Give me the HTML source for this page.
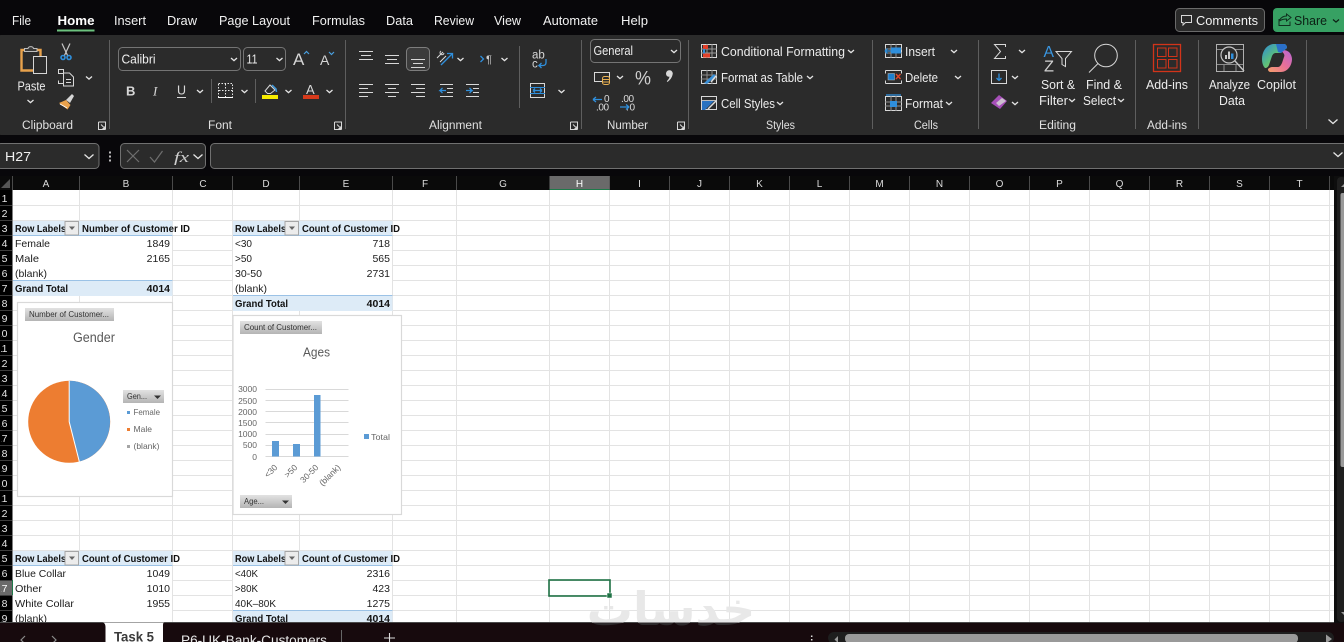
<!DOCTYPE html>
<html><head><meta charset="utf-8"><title>Excel</title>
<style>
html,body{margin:0;padding:0;width:1344px;height:642px;overflow:hidden;background:#08070a}
svg{display:block;font-family:"Liberation Sans",Arial,sans-serif}
.m{font-size:13px;fill:#f2f2f2}
.r{font-size:12.5px;fill:#ececec}
.g{font-size:11.5px;fill:#e0e0e0}
.c{font-size:10px;fill:#dcdcdc;text-anchor:middle}
.n{font-size:10.5px;fill:#e4e4e4;text-anchor:end}
.d{font-size:10.5px;fill:#1c1c1c}
.b{font-size:10.5px;fill:#111;font-weight:bold}
.e{text-anchor:end}
.i{fill:none;stroke:#d8d8d8;stroke-width:1}
.bl{stroke:#2f8fdc;fill:none;stroke-width:1.3}
.ch{fill:none;stroke:#e4e4e4;stroke-width:1.3}
.cb{font-size:8px;fill:#333}
.ax{font-size:8.5px;fill:#666}
</style></head><body>
<svg width="1344" height="642" viewBox="0 0 1344 642" xmlns="http://www.w3.org/2000/svg">
<defs>
<path id="ch" d="M0 0l3 2.6 3-2.6" class="ch"/>
<linearGradient id="btn" x1="0" y1="0" x2="0" y2="1"><stop offset="0" stop-color="#e2e2e2"/><stop offset="1" stop-color="#b4b4b4"/></linearGradient>
<linearGradient id="cop" x1="0" y1="0" x2="1" y2="1"><stop offset="0" stop-color="#2d8ad8"/><stop offset=".5" stop-color="#5cc07a"/><stop offset="1" stop-color="#e8c040"/></linearGradient>
<linearGradient id="cop2" x1="1" y1="0" x2="0" y2="1"><stop offset="0" stop-color="#b665d6"/><stop offset=".5" stop-color="#e86f98"/><stop offset="1" stop-color="#f5a06a"/></linearGradient>
<clipPath id="sheet"><rect x="0" y="190" width="1344" height="432.5"/></clipPath>
<clipPath id="dark"><rect x="0" y="622.5" width="1344" height="20"/></clipPath>
<clipPath id="rowh"><rect x="1" y="190" width="11" height="433"/></clipPath>
<clipPath id="tabc"><rect x="0" y="620" width="1344" height="22"/></clipPath>
</defs>

<!-- top chrome -->
<rect width="1344" height="642" fill="#08070a"/>
<text class="m" x="12" y="25" textLength="19" lengthAdjust="spacingAndGlyphs">File</text>
<text class="m" x="57.500" y="25" textLength="37" lengthAdjust="spacingAndGlyphs" style="font-weight:bold;fill:#fff">Home</text>
<rect x="57" y="29.500" width="37.500" height="2" fill="#6cc27e"/>
<text class="m" x="114" y="25" textLength="32" lengthAdjust="spacingAndGlyphs">Insert</text>
<text class="m" x="167" y="25" textLength="30" lengthAdjust="spacingAndGlyphs">Draw</text>
<text class="m" x="219" y="25" textLength="71" lengthAdjust="spacingAndGlyphs">Page Layout</text>
<text class="m" x="312" y="25" textLength="53" lengthAdjust="spacingAndGlyphs">Formulas</text>
<text class="m" x="386" y="25" textLength="27" lengthAdjust="spacingAndGlyphs">Data</text>
<text class="m" x="434" y="25" textLength="40" lengthAdjust="spacingAndGlyphs">Review</text>
<text class="m" x="494" y="25" textLength="27" lengthAdjust="spacingAndGlyphs">View</text>
<text class="m" x="543" y="25" textLength="55" lengthAdjust="spacingAndGlyphs">Automate</text>
<text class="m" x="621" y="25" textLength="27" lengthAdjust="spacingAndGlyphs">Help</text>

<!-- comments / share -->
<rect x="1175.500" y="8.500" width="89" height="23" rx="4" fill="#2a2a2a" stroke="#6a6a6a"/>
<path d="M1181.500 15.500h10v7h-6l-2.500 2.500v-2.500h-1.500z" class="i"/>
<text class="m" x="1196" y="25" textLength="62" lengthAdjust="spacingAndGlyphs">Comments</text>
<rect x="1273" y="8" width="75" height="24" rx="4" fill="#37a163"/>
<path d="M1279 19v6.500h11v-4M1279.500 20c2-3 4-4 7-4v-2l4.500 3.500-4.500 3.500v-2c-3 0-5 .5-7 2" fill="none" stroke="#10301f" stroke-width="1"/>
<text class="m" x="1294" y="25" textLength="33" lengthAdjust="spacingAndGlyphs" style="fill:#0c1f14">Share</text>
<path d="M1333 19.500l3 2.600 3-2.600" fill="none" stroke="#0c1f14" stroke-width="1.200"/>

<!-- ribbon -->
<rect x="-6" y="35" width="1356" height="100" rx="7" fill="#2b2b2b"/>
<g stroke="#5e5e5e" stroke-width="1">
<path d="M109.500 40v89M345.500 40v89M581.500 40v89M688.500 40v89M872.500 40v89M978.500 40v89M1135.500 40v89M1198.500 40v89M1306.500 40v89M519.500 46v62M211.500 79v24M255.500 79v24"/>
</g>

<!-- clipboard -->
<path d="M27 50h-5.500v20.500h12" fill="none" stroke="#e8a24c" stroke-width="2.400"/>
<path d="M34 50h6.500v6" fill="none" stroke="#e8a24c" stroke-width="2.400"/>
<path d="M24.500 51.500v-3h3.500c.5-2.500 5-2.500 5.500 0h3.500v3z" fill="#3a3a3a" stroke="#bdbdbd"/>
<rect x="33.500" y="56.500" width="13" height="17" fill="#2b2b2b" stroke="#d6d6d6"/>
<text class="r" x="17.500" y="90.500" textLength="28" lengthAdjust="spacingAndGlyphs">Paste</text>
<use href="#ch" x="27.500" y="100"/>
<path d="M62 43.500l6 13M70 43.500l-6 13" stroke="#c8c8c8" stroke-width="1.200"/>
<circle cx="63" cy="57.500" r="2" fill="none" stroke="#2f8fdc" stroke-width="1.600"/><circle cx="69" cy="57.500" r="2" fill="none" stroke="#2f8fdc" stroke-width="1.600"/>
<path d="M63 73.500h-4.500v-4h5v14h-5v-3M63.500 73h6l4 4v9h-10z" class="i"/>
<path d="M66 79.500h5M66 82.500h5" class="i"/>
<use href="#ch" x="86" y="76.500"/>
<path d="M59 103l7-3 4.500 5-3 4.500z" fill="#e9a24d"/><path d="M66 100l6-6 2 2-4 7z" fill="#d6d6d6"/><path d="M60 104l7 4" stroke="#fff" stroke-width="1"/>
<text class="g" x="22" y="129" textLength="51" lengthAdjust="spacingAndGlyphs">Clipboard</text>
<path d="M98.500 122v7.500h7M98.500 122h7v7.500M101 124.500l4 4M105 126v2.500h-2.500" class="i" stroke-width=".9"/>

<!-- font -->
<rect x="118.500" y="47.500" width="122" height="23" rx="4" fill="#2b2b2b" stroke="#747474"/>
<text class="r" x="121.500" y="63.500" textLength="34" lengthAdjust="spacingAndGlyphs" style="fill:#f0f0f0">Calibri</text>
<use href="#ch" x="231" y="58"/>
<rect x="243.500" y="47.500" width="42" height="23" rx="4" fill="#2b2b2b" stroke="#747474"/>
<text class="r" x="246.500" y="63.500" textLength="11" lengthAdjust="spacingAndGlyphs">11</text>
<use href="#ch" x="276.500" y="58"/>
<text x="293" y="65" style="font-size:17px;fill:#d6d6d6">A</text>
<path d="M304 54l2.500-2.500 2.500 2.500" fill="none" stroke="#4aa0e0" stroke-width="1.200"/>
<text x="320" y="65" style="font-size:14px;fill:#d6d6d6">A</text>
<path d="M329 52l2.500 2.500 2.500-2.500" fill="none" stroke="#4aa0e0" stroke-width="1.200"/>
<text x="126" y="95.500" style="font-size:13px;font-weight:bold;fill:#d8d8d8">B</text>
<text x="153" y="95.500" style="font-size:13px;font-style:italic;fill:#d8d8d8;font-family:'Liberation Serif',serif">I</text>
<text x="177" y="94.500" style="font-size:12.500px;fill:#d8d8d8">U</text><path d="M177 97.500h9" stroke="#d8d8d8"/>
<use href="#ch" x="197" y="90"/>
<rect x="218.500" y="83.500" width="14" height="14" fill="none" stroke="#e8e8e8" stroke-dasharray="1.500 1.500"/><path d="M225.500 84v14M219 90.500h14" stroke="#e8e8e8" stroke-dasharray="1.500 1.500"/><path d="M218 97.500h15" stroke="#fff"/>
<use href="#ch" x="241.500" y="90"/>
<path d="M265 91l5-6 5 5-4.500 3.500h-3z" fill="none" stroke="#d8d8d8"/><path d="M272 85l4 4 .5 3" stroke="#3c98dc" fill="none" stroke-width="1.500"/>
<rect x="262" y="95" width="16" height="4" fill="#f7ec00"/>
<use href="#ch" x="285.500" y="90"/>
<text x="306" y="94" style="font-size:13px;fill:#d8d8d8">A</text>
<rect x="303" y="95" width="16" height="4" fill="#d63a1b"/>
<use href="#ch" x="326.500" y="90"/>
<text class="g" x="208" y="129" textLength="24" lengthAdjust="spacingAndGlyphs">Font</text>
<path d="M334.500 122v7.500h7M334.500 122h7v7.500M337 124.500l4 4M341 126v2.500h-2.500" class="i" stroke-width=".9"/>

<!-- alignment -->
<path d="M359 51.500h14M361 55.500h10M359 59.500h14M385 55.500h14M387 59.500h10M385 63.500h14" class="i"/>
<rect x="406.500" y="47.500" width="23" height="23" rx="4" fill="#3c3c3c" stroke="#7d7d7d"/>
<path d="M411 59.500h14M413 63.500h10M411 67.500h14" class="i"/>
<path d="M359 84.500h14M359 88.500h9M359 92.500h14M359 96.500h9M385 84.500h14M388 88.500h8M385 92.500h14M388 96.500h8M411 84.500h14M416 88.500h9M411 92.500h14M416 96.500h9" class="i"/>
<path d="M440 84.500h13M447 88.500h6M447 92.500h6M440 96.500h13M466 84.500h13M473 88.500h6M473 92.500h6M466 96.500h13" class="i"/>
<path d="M446 90.500h-6l2.500-2.500M440 90.500l2.500 2.500M466 90.500h6l-2.500-2.500M472 90.500l-2.500 2.500" class="bl"/>
<path d="M437 58l6-6 M440 62l6-6M444 53a2 2 0 1 1-3-2" class="i"/><path d="M441 65l11-11M447 53.500h5.500v5" class="bl"/>
<use href="#ch" x="457.500" y="58"/>
<path d="M480.500 56l3 3-3 3" class="bl"/>
<text x="486" y="63" style="font-size:11px;fill:#cfcfcf">¶</text>
<use href="#ch" x="501.500" y="58"/>
<text x="532" y="58.500" style="font-size:11.500px;fill:#d6d6d6">ab</text>
<text x="532" y="67.500" style="font-size:11.500px;fill:#d6d6d6">c</text>
<path d="M546 59v3.500c0 2-1 3-3 3h-4l2.500-2.500M539 65.500l2.500 2.500" class="bl"/>
<rect x="530.500" y="83.500" width="14" height="14" class="i"/><path d="M530 87.500h15M530 93.500h15" stroke="#2f8fdc"/><path d="M533 90.500h9M533 90.500l2-2M533 90.500l2 2M542 90.500l-2-2M542 90.500l-2 2" class="bl" stroke-width="1"/>
<use href="#ch" x="558.500" y="90"/>
<text class="g" x="429" y="129" textLength="53" lengthAdjust="spacingAndGlyphs">Alignment</text>
<path d="M570.500 122v7.500h7M570.500 122h7v7.500M573 124.500l4 4M577 126v2.500h-2.500" class="i" stroke-width=".9"/>

<!-- number -->
<rect x="590.500" y="39.500" width="90" height="23" rx="4" fill="#2b2b2b" stroke="#747474"/>
<text class="r" x="593.500" y="55" textLength="39.500" lengthAdjust="spacingAndGlyphs">General</text>
<use href="#ch" x="671" y="50"/>
<rect x="594.500" y="72.500" width="15" height="9" class="i"/><rect x="602.500" y="76.500" width="7" height="8" rx="2" fill="#2b2b2b" stroke="#e8b052"/><path d="M603 79.500h6M603 82h6" stroke="#e8b052"/>
<use href="#ch" x="617" y="76"/>
<text x="635" y="84.500" style="font-size:19px;fill:#cfcfcf" textLength="16" lengthAdjust="spacingAndGlyphs">%</text>
<path d="M666 73.500a3.400 3.400 0 1 1 6.500 1.500c-.6 2.500-2.300 5-5 7l-.7-.8c1.400-1.400 2.400-2.800 2.700-4.600-2 .5-3.500-1-3.500-3.100z" fill="#d8d8d8"/>
<text x="604" y="102" style="font-size:10px;fill:#dcdcdc">0</text><text x="596" y="110.500" style="font-size:10px;fill:#dcdcdc" textLength="13">.00</text>
<path d="M593 99.500h9M593 99.500l3-2.500M593 99.500l3 2.500" class="bl"/>
<text x="621" y="102" style="font-size:10px;fill:#dcdcdc" textLength="13">.00</text><text x="626" y="110.500" style="font-size:10px;fill:#dcdcdc" textLength="9">.0</text>
<path d="M620 107h9M629 107l-3-2.500M629 107l-3 2.500" class="bl"/>
<text class="g" x="607" y="129" textLength="41" lengthAdjust="spacingAndGlyphs">Number</text>
<path d="M677.500 122v7.500h7M677.500 122h7v7.500M680 124.500l4 4M684 126v2.500h-2.500" class="i" stroke-width=".9"/>

<!-- styles -->
<rect x="701.500" y="44.500" width="15" height="13" class="i" stroke="#bbb"/><path d="M707 44v14M712 44v14M701 49h16M701 53h16" stroke="#9a9a9a"/><rect x="703" y="45" width="5" height="4" fill="#e2402a"/><rect x="703" y="53.500" width="7" height="4" fill="#e2402a"/><rect x="703" y="49" width="2" height="4.500" fill="#2f8fdc"/>
<rect x="701.500" y="70.500" width="15" height="13" class="i"/><path d="M701 75h16M701 79h16M707 70v14M712 70v14" stroke="#888"/><path d="M704 83l10-9 2 2-9 8z" fill="#3a90d8"/><path d="M711 82l5-6" stroke="#ddd" stroke-width="1.500"/>
<rect x="701.500" y="96.500" width="15" height="13" class="i"/><path d="M702 100.500h14" stroke="#bbb"/><path d="M702 101h12l-9 9h-3z" fill="#2a72c0"/><path d="M708 109l8-8" stroke="#ddd" stroke-width="1.500"/>
<text class="r" x="721" y="56" textLength="124" lengthAdjust="spacingAndGlyphs">Conditional Formatting</text>
<use href="#ch" x="848" y="50"/>
<text class="r" x="721" y="82" textLength="82" lengthAdjust="spacingAndGlyphs">Format as Table</text>
<use href="#ch" x="807" y="76"/>
<text class="r" x="721" y="108" textLength="54" lengthAdjust="spacingAndGlyphs">Cell Styles</text>
<use href="#ch" x="777" y="102"/>
<text class="g" x="766" y="129" textLength="29" lengthAdjust="spacingAndGlyphs">Styles</text>

<!-- cells -->
<rect x="885.500" y="44.500" width="16" height="13" class="i" stroke="#bbb"/><path d="M891 44v14M896 44v14M885 49h17M885 53h17" stroke="#909090"/><rect x="891" y="47.500" width="10" height="6" fill="#2f8fdc"/><path d="M893 51h-8M885 51l2.500-2.500M885 51l2.500 2.500" class="bl" stroke-width="1"/>
<path d="M885.500 70.500h16M885.500 83.500h16M885.500 70.500v3M885.500 80.500v3M901.500 70.500v3M901.500 80.500v3" class="i"/><rect x="888" y="73.500" width="6.500" height="6.500" fill="#1e80d0" stroke="#bbb" stroke-width=".5"/><path d="M896 74l4.500 5M900.500 74l-4.500 5" stroke="#e0452a" stroke-width="1.400"/>
<rect x="885.500" y="96.500" width="16" height="14" class="i" stroke="#bbb"/><path d="M891 96v15M896 96v15M885 102h17M885 106h17" stroke="#909090"/><rect x="890" y="101" width="7" height="6" fill="#2f8fdc"/><path d="M886 95h15" class="bl" stroke-width="1"/>
<text class="r" x="905" y="56" textLength="30" lengthAdjust="spacingAndGlyphs">Insert</text>
<use href="#ch" x="951" y="50"/>
<text class="r" x="905" y="82" textLength="33" lengthAdjust="spacingAndGlyphs">Delete</text>
<use href="#ch" x="955" y="76"/>
<text class="r" x="905" y="108" textLength="38" lengthAdjust="spacingAndGlyphs">Format</text>
<use href="#ch" x="946" y="102"/>
<text class="g" x="914" y="129" textLength="24" lengthAdjust="spacingAndGlyphs">Cells</text>

<!-- editing -->
<path d="M1005.500 47v-2.500h-11l6 7-6 7h11v-2.500" class="i"/>
<use href="#ch" x="1019" y="50"/>
<rect x="991.500" y="70.500" width="15" height="13" class="i"/><path d="M999 73.500v7M999 80.500l-2.500-2.500M999 80.500l2.500-2.500" class="bl"/>
<use href="#ch" x="1012" y="76"/>
<path d="M991 103l8-8 8 6-7 8z" fill="#a64fb8"/><path d="M999 106l-3-3 6-5 4 3z" fill="#d4d4d4" opacity=".85"/>
<use href="#ch" x="1012" y="102"/>
<text x="1043.500" y="57" style="font-size:15.500px;fill:#3a96e0" textLength="10.500" lengthAdjust="spacingAndGlyphs">A</text>
<text x="1044" y="71.500" style="font-size:15.500px;fill:#d0d0d0" textLength="10" lengthAdjust="spacingAndGlyphs">Z</text>
<path d="M1056 51.500h15.500l-6 7v8l-3.500-2v-6z" class="i"/>
<circle cx="1106" cy="55.500" r="11.300" class="i" stroke-width="1.200"/><path d="M1098 63.500l-9 9" class="i" stroke-width="1.200"/>
<text class="r" x="1041" y="89" textLength="34" lengthAdjust="spacingAndGlyphs">Sort &amp;</text>
<text class="r" x="1039" y="105" textLength="29" lengthAdjust="spacingAndGlyphs">Filter</text>
<use href="#ch" x="1069" y="99"/>
<text class="r" x="1086" y="89" textLength="36" lengthAdjust="spacingAndGlyphs">Find &amp;</text>
<text class="r" x="1083" y="105" textLength="33" lengthAdjust="spacingAndGlyphs">Select</text>
<use href="#ch" x="1118" y="99"/>
<text class="g" x="1039" y="129" textLength="37" lengthAdjust="spacingAndGlyphs">Editing</text>

<!-- addins -->
<rect x="1153.500" y="44.500" width="27" height="27" fill="none" stroke="#d2341a" stroke-width="1.300"/>
<rect x="1157.500" y="48" width="8.500" height="8.500" fill="none" stroke="#d2341a"/><rect x="1168.500" y="48" width="8.500" height="8.500" fill="none" stroke="#d2341a"/><rect x="1157.500" y="59.500" width="8.500" height="8.500" fill="none" stroke="#d2341a"/><rect x="1168.500" y="59.500" width="8.500" height="8.500" fill="none" stroke="#d2341a"/>
<text class="r" x="1146" y="89" textLength="42" lengthAdjust="spacingAndGlyphs">Add-ins</text>
<text class="g" x="1147" y="129" textLength="40" lengthAdjust="spacingAndGlyphs">Add-ins</text>

<!-- analyze -->
<rect x="1216.500" y="44.500" width="27" height="27" fill="none" stroke="#b0b0b0"/>
<path d="M1217 49.500h26M1217 64.500h26M1224 65v6M1236 65v6" stroke="#8c8c8c"/>
<circle cx="1229" cy="55" r="8" fill="#2b2b2b" stroke="#c4c4c4" stroke-width="1.200"/>
<path d="M1235 61l9 10" stroke="#c4c4c4" stroke-width="1.400"/>
<rect x="1225" y="55" width="2" height="4" fill="#ccc"/><rect x="1228" y="51.500" width="2" height="7.500" fill="#ccc"/><rect x="1231" y="53.500" width="2.500" height="5.500" fill="#2f8fdc"/>
<text class="r" x="1209" y="89" textLength="41" lengthAdjust="spacingAndGlyphs">Analyze</text>
<text class="r" x="1219" y="105" textLength="26" lengthAdjust="spacingAndGlyphs">Data</text>
<!-- copilot -->
<path d="M1262 59c0-8 5-15 12-15h10c2 0 3 2 3 4l-6 5h-5c-2 0-3 1-4 3l-3 9c-1 2-2 3-4 3-2-2-3-5-3-9z" fill="url(#cop)"/>
<path d="M1281 51c4-2 6 0 8 1 2 2 3 5 3 7 0 7-5 13-11 13h-10c-2 0-3-1-3-3 1-1 2-2 5-2h5c2 0 3-2 4-4l2-6c1-2 0-4-3-6z" fill="url(#cop2)"/>
<path d="M1276 44h8c2 0 3 2 3 4l-6 5-3-1z" fill="#2a6fc8"/>
<text class="r" x="1257" y="89" textLength="39" lengthAdjust="spacingAndGlyphs">Copilot</text>
<path d="M1328.500 119.500l4.500 4 4.500-4" class="ch"/>

<!-- formula bar -->
<rect x="-3" y="143.500" width="102" height="25" rx="4" fill="#2b2b2b" stroke="#707070"/>
<text x="5" y="161" style="font-size:13px;fill:#f0f0f0" textLength="26" lengthAdjust="spacingAndGlyphs">H27</text>
<path d="M84.500 154.500l4.500 4 4.500-4" class="ch"/>
<path d="M110 151.500v2M110 155.500v2M110 159.500v2" stroke="#e8e8e8" stroke-width="1.600"/>
<rect x="120.500" y="143.500" width="85" height="25" rx="4" fill="#2b2b2b" stroke="#707070"/>
<path d="M127 150l12 12M139 150l-12 12M150 157l4.500 5 8-11" fill="none" stroke="#6e6e6e" stroke-width="1.200"/>
<text x="174" y="162" style="font-size:15px;font-style:italic;fill:#cfcfcf;font-family:'Liberation Serif',serif" textLength="15" lengthAdjust="spacingAndGlyphs">fx</text>
<path d="M193.500 154.500l4.500 4 4.500-4" class="ch" stroke="#999"/>
<rect x="210.500" y="143.500" width="1140" height="25" rx="4" fill="#2b2b2b" stroke="#707070"/>
<path d="M1333.500 152.500l4.500 4 4.500-4" class="ch"/>

<!-- corner + column headers -->
<rect x="0" y="176" width="1337" height="14" fill="#0a0a0a"/>
<path d="M10 179v9h-9z" fill="#555"/>
<path d="M12.500 176v14M79.500 176v14M172.500 176v14M232.500 176v14M299.500 176v14M392.500 176v14M456.500 176v14M609.500 176v14M669.500 176v14M729.500 176v14M789.500 176v14M849.500 176v14M909.500 176v14M969.500 176v14M1029.500 176v14M1089.500 176v14M1149.500 176v14M1209.500 176v14M1269.500 176v14M1329.500 176v14" stroke="#4a4a4a"/>
<rect x="549.500" y="176" width="60" height="13" fill="#6a6a6a"/>
<rect x="549.500" y="189" width="60" height="1.500" fill="#1f7a4a"/>
<text class="c" x="46" y="187">A</text><text class="c" x="126" y="187">B</text><text class="c" x="203" y="187">C</text><text class="c" x="266" y="187">D</text><text class="c" x="346" y="187">E</text><text class="c" x="425" y="187">F</text><text class="c" x="503" y="187">G</text><text class="c" x="579.500" y="187" style="fill:#fff">H</text><text class="c" x="639.500" y="187">I</text><text class="c" x="699.500" y="187">J</text><text class="c" x="759.500" y="187">K</text><text class="c" x="819.500" y="187">L</text><text class="c" x="879.500" y="187">M</text><text class="c" x="939.500" y="187">N</text><text class="c" x="999.500" y="187">O</text><text class="c" x="1059.500" y="187">P</text><text class="c" x="1119.500" y="187">Q</text><text class="c" x="1179.500" y="187">R</text><text class="c" x="1239.500" y="187">S</text><text class="c" x="1299.500" y="187">T</text>

<!-- sheet -->
<rect x="12" y="190" width="1322" height="433" fill="#fff"/>
<rect x="0" y="190" width="12.500" height="433" fill="#000"/>
<rect x="0" y="580" width="12" height="15" fill="#6a6a6a"/>
<path d="M0 205.500h12M0 220.500h12M0 235.500h12M0 250.500h12M0 265.500h12M0 280.500h12M0 295.500h12M0 310.500h12M0 325.500h12M0 340.500h12M0 355.500h12M0 370.500h12M0 385.500h12M0 400.500h12M0 415.500h12M0 430.500h12M0 445.500h12M0 460.500h12M0 475.500h12M0 490.500h12M0 505.500h12M0 520.500h12M0 535.500h12M0 550.500h12M0 565.500h12M0 580.500h12M0 595.500h12M0 610.500h12" stroke="#3c3c3c"/>
<g clip-path="url(#rowh)">
<text class="n" x="7.500" y="202">1</text><text class="n" x="7.500" y="217">2</text><text class="n" x="7.500" y="232">3</text><text class="n" x="7.500" y="247">4</text><text class="n" x="7.500" y="262">5</text><text class="n" x="7.500" y="277">6</text><text class="n" x="7.500" y="292">7</text><text class="n" x="7.500" y="307">8</text><text class="n" x="7.500" y="322">9</text><text class="n" x="7.500" y="337">10</text><text class="n" x="7.500" y="352">11</text><text class="n" x="7.500" y="367">12</text><text class="n" x="7.500" y="382">13</text><text class="n" x="7.500" y="397">14</text><text class="n" x="7.500" y="412">15</text><text class="n" x="7.500" y="427">16</text><text class="n" x="7.500" y="442">17</text><text class="n" x="7.500" y="457">18</text><text class="n" x="7.500" y="472">19</text><text class="n" x="7.500" y="487">20</text><text class="n" x="7.500" y="502">21</text><text class="n" x="7.500" y="517">22</text><text class="n" x="7.500" y="532">23</text><text class="n" x="7.500" y="547">24</text><text class="n" x="7.500" y="562">25</text><text class="n" x="7.500" y="577">26</text><text class="n" x="7.500" y="592" style="fill:#fff">27</text><text class="n" x="7.500" y="607">28</text><text class="n" x="7.500" y="622">29</text>
</g>
<rect x="12" y="580" width="1.500" height="15" fill="#1f7a4a"/>

<!-- gridlines -->
<g stroke="#e3e3e3" stroke-width="1">
<path d="M13 205.500h1321M13 220.500h1321M13 235.500h1321M13 250.500h1321M13 265.500h1321M13 280.500h1321M13 295.500h1321M13 310.500h1321M13 325.500h1321M13 340.500h1321M13 355.500h1321M13 370.500h1321M13 385.500h1321M13 400.500h1321M13 415.500h1321M13 430.500h1321M13 445.500h1321M13 460.500h1321M13 475.500h1321M13 490.500h1321M13 505.500h1321M13 520.500h1321M13 535.500h1321M13 550.500h1321M13 565.500h1321M13 580.500h1321M13 595.500h1321M13 610.500h1321"/>
<path d="M79.500 190v433M172.500 190v433M232.500 190v433M299.500 190v433M392.500 190v433M456.500 190v433M549.500 190v433M609.500 190v433M669.500 190v433M729.500 190v433M789.500 190v433M849.500 190v433M909.500 190v433M969.500 190v433M1029.500 190v433M1089.500 190v433M1149.500 190v433M1209.500 190v433M1269.500 190v433M1329.500 190v433"/>
</g>

<!-- white pivot bodies (no gridlines) -->
<g fill="#fff">
<rect x="13" y="236" width="159" height="44.500"/>
<rect x="233" y="236" width="159" height="59.500"/>
<rect x="13" y="566" width="159" height="57"/>
<rect x="233" y="566" width="159" height="44.500"/>
</g>
<!-- pivot fills -->
<g fill="#ddebf7">
<rect x="13" y="221" width="159.500" height="14.500"/>
<rect x="13" y="281" width="159.500" height="15"/>
<rect x="233" y="221" width="159.500" height="14.500"/>
<rect x="233" y="296" width="159.500" height="15"/>
<rect x="13" y="551" width="159.500" height="14.500"/>
<rect x="233" y="551" width="159.500" height="14.500"/>
<rect x="233" y="611" width="159.500" height="12"/>
</g>
<path d="M13 235.500h159.500M233 235.500h159.500M13 280.500h159.500M233 295.500h159.500M13 565.500h159.500M233 565.500h159.500M233 610.500h159.500" stroke="#9bc2e6"/>

<!-- table 1 -->
<text class="b" x="15" y="232" textLength="51" lengthAdjust="spacingAndGlyphs">Row Labels</text>
<text class="b" x="82" y="232" textLength="108" lengthAdjust="spacingAndGlyphs">Number of Customer ID</text>
<text class="d" x="15" y="247" textLength="35" lengthAdjust="spacingAndGlyphs">Female</text><text class="d e" x="170" y="247">1849</text>
<text class="d" x="15" y="262" textLength="24" lengthAdjust="spacingAndGlyphs">Male</text><text class="d e" x="170" y="262">2165</text>
<text class="d" x="15" y="277" textLength="32" lengthAdjust="spacingAndGlyphs">(blank)</text>
<text class="b" x="15" y="292" textLength="53" lengthAdjust="spacingAndGlyphs">Grand Total</text><text class="b e" x="170" y="292">4014</text>
<!-- table 2 -->
<text class="b" x="235" y="232" textLength="51" lengthAdjust="spacingAndGlyphs">Row Labels</text>
<text class="b" x="302" y="232" textLength="98" lengthAdjust="spacingAndGlyphs">Count of Customer ID</text>
<text class="d" x="235" y="247" textLength="17" lengthAdjust="spacingAndGlyphs">&lt;30</text><text class="d e" x="390" y="247">718</text>
<text class="d" x="235" y="262" textLength="17" lengthAdjust="spacingAndGlyphs">&gt;50</text><text class="d e" x="390" y="262">565</text>
<text class="d" x="235" y="277" textLength="27" lengthAdjust="spacingAndGlyphs">30-50</text><text class="d e" x="390" y="277">2731</text>
<text class="d" x="235" y="292" textLength="32" lengthAdjust="spacingAndGlyphs">(blank)</text>
<text class="b" x="235" y="307" textLength="53" lengthAdjust="spacingAndGlyphs">Grand Total</text><text class="b e" x="390" y="307">4014</text>
<!-- table 3 -->
<text class="b" x="15" y="562" textLength="51" lengthAdjust="spacingAndGlyphs">Row Labels</text>
<text class="b" x="82" y="562" textLength="98" lengthAdjust="spacingAndGlyphs">Count of Customer ID</text>
<text class="d" x="15" y="577" textLength="51" lengthAdjust="spacingAndGlyphs">Blue Collar</text><text class="d e" x="170" y="577">1049</text>
<text class="d" x="15" y="592" textLength="27" lengthAdjust="spacingAndGlyphs">Other</text><text class="d e" x="170" y="592">1010</text>
<text class="d" x="15" y="607" textLength="59" lengthAdjust="spacingAndGlyphs">White Collar</text><text class="d e" x="170" y="607">1955</text>
<text class="d" x="15" y="622" textLength="32" lengthAdjust="spacingAndGlyphs">(blank)</text>
<!-- table 4 -->
<text class="b" x="235" y="562" textLength="51" lengthAdjust="spacingAndGlyphs">Row Labels</text>
<text class="b" x="302" y="562" textLength="98" lengthAdjust="spacingAndGlyphs">Count of Customer ID</text>
<text class="d" x="235" y="577" textLength="23" lengthAdjust="spacingAndGlyphs">&lt;40K</text><text class="d e" x="390" y="577">2316</text>
<text class="d" x="235" y="592" textLength="23" lengthAdjust="spacingAndGlyphs">&gt;80K</text><text class="d e" x="390" y="592">423</text>
<text class="d" x="235" y="607" textLength="41" lengthAdjust="spacingAndGlyphs">40K–80K</text><text class="d e" x="390" y="607">1275</text>
<text class="b" x="235" y="622" textLength="53" lengthAdjust="spacingAndGlyphs">Grand Total</text><text class="b e" x="390" y="622">4014</text>

<!-- filter buttons -->
<g fill="#ececec" stroke="#a6a6a6">
<rect x="65" y="221.500" width="13.500" height="13.500"/><rect x="285" y="221.500" width="13.500" height="13.500"/><rect x="65" y="551.500" width="13.500" height="13.500"/><rect x="285" y="551.500" width="13.500" height="13.500"/>
</g>
<g fill="#666"><path d="M69 226.500h6l-3 3.500zM289 226.500h6l-3 3.500zM69 556.500h6l-3 3.500zM289 556.500h6l-3 3.500z"/></g>

<!-- chart 1 -->
<rect x="17.500" y="302.500" width="155" height="194" fill="#fff" stroke="#d9d9d9" stroke-width="1.200"/>
<rect x="25" y="308" width="89" height="13" fill="url(#btn)"/>
<text class="cb" x="29" y="317" textLength="80" lengthAdjust="spacingAndGlyphs">Number of Customer...</text>
<text x="73" y="342" style="font-size:13.500px;fill:#595959" textLength="42" lengthAdjust="spacingAndGlyphs">Gender</text>
<circle cx="69.200" cy="421.800" r="41" fill="#ed7d31"/>
<path d="M69.200 421.800V380.800A41 41 0 0 1 79.300 461.500z" fill="#5b9bd5"/>
<path d="M69.200 380.800V421.800L79.300 461.500" fill="none" stroke="#fff" stroke-width="1"/>
<rect x="123" y="390" width="41" height="13" fill="url(#btn)"/>
<text class="cb" x="127" y="399" textLength="20" lengthAdjust="spacingAndGlyphs">Gen...</text>
<path d="M154 395.500h7l-3.500 3.500z" fill="#333"/>
<rect x="127" y="411" width="3" height="3" fill="#5b9bd5"/><rect x="127" y="428" width="3" height="3" fill="#ed7d31"/><rect x="127" y="445" width="3" height="3" fill="#a5a5a5"/>
<text class="ax" x="133.500" y="415" textLength="26.500" lengthAdjust="spacingAndGlyphs">Female</text>
<text class="ax" x="133.500" y="432" textLength="18.500" lengthAdjust="spacingAndGlyphs">Male</text>
<text class="ax" x="133.500" y="449" textLength="26" lengthAdjust="spacingAndGlyphs">(blank)</text>

<!-- chart 2 -->
<rect x="233" y="315.500" width="168.500" height="199" fill="#fff" stroke="#d9d9d9" stroke-width="1.200"/>
<rect x="240" y="321" width="82" height="13" fill="url(#btn)"/>
<text class="cb" x="244" y="330" textLength="73" lengthAdjust="spacingAndGlyphs">Count of Customer...</text>
<text x="303" y="356.500" style="font-size:13px;fill:#595959" textLength="27" lengthAdjust="spacingAndGlyphs">Ages</text>
<path d="M265.500 389.500h83M265.500 400.500h83M265.500 411.500h83M265.500 422.500h83M265.500 434.500h83M265.500 445.500h83M265.500 456.500h83" stroke="#d9d9d9"/>
<g text-anchor="end" class="ax">
<text x="257" y="392">3000</text><text x="257" y="404">2500</text><text x="257" y="415">2000</text><text x="257" y="426">1500</text><text x="257" y="437">1000</text><text x="257" y="448">500</text><text x="257" y="460">0</text>
</g>
<rect x="272" y="441" width="7" height="15.500" fill="#5b9bd5"/>
<rect x="293" y="444" width="7" height="12.500" fill="#5b9bd5"/>
<rect x="314" y="395" width="6.500" height="61.500" fill="#5b9bd5"/>
<g class="ax" text-anchor="end">
<text transform="translate(278 468) rotate(-45)">&lt;30</text>
<text transform="translate(298 468) rotate(-45)">&gt;50</text>
<text transform="translate(319 468) rotate(-45)">30-50</text>
<text transform="translate(341 468) rotate(-45)">(blank)</text>
</g>
<rect x="364" y="434" width="5" height="5" fill="#5b9bd5"/>
<text class="ax" x="371" y="440" textLength="19" lengthAdjust="spacingAndGlyphs">Total</text>
<rect x="240" y="495" width="52" height="13" fill="url(#btn)"/>
<text class="cb" x="244" y="504" textLength="20" lengthAdjust="spacingAndGlyphs">Age...</text>
<path d="M282 500.500h7l-3.500 3.500z" fill="#333"/>

<!-- selection -->
<rect x="549" y="580" width="61" height="16" fill="none" stroke="#1f7245" stroke-width="1.600"/>
<rect x="607" y="593" width="5" height="5" fill="#1f7245" stroke="#fff" stroke-width=".5"/>

<!-- bottom bar -->
<rect x="0" y="622.500" width="1344" height="20" fill="#170a0d"/>
<path d="M0 622.500H1334" stroke="#4a4a4a"/>
<!-- white tab -->
<path d="M105.500 642v-15c0-3-1.500-4.500-3-4.500h62c-1.500 0-1.500 1.500-1.500 4.500v15z" fill="#fff"/>
<g clip-path="url(#tabc)">
<text x="114" y="641.500" style="font-size:13.500px;font-weight:bold;fill:#3a3a3a" textLength="40" lengthAdjust="spacingAndGlyphs">Task 5</text>
<text x="181" y="645" style="font-size:13.500px;fill:#e8e8e8" textLength="146" lengthAdjust="spacingAndGlyphs">P6-UK-Bank-Customers</text>
</g>
<path d="M341.500 630v12" stroke="#666"/>
<path d="M384 638h11M389.500 633v9" stroke="#ddd" stroke-width="1.100"/>
<path d="M25 636l-4 4 3 3M52 636l4 4-3 3" fill="none" stroke="#8a8a8a" stroke-width="1.200"/>
<path d="M811.700 635.500v1.500M811.700 639v1.500" stroke="#ddd" stroke-width="1.500"/>

<!-- watermark -->
<g clip-path="url(#sheet)"><text x="671" y="625" text-anchor="middle" style="font-size:46px;font-weight:bold;fill:#e8e8e8;font-family:'DejaVu Sans',sans-serif">خدسات</text></g>
<g clip-path="url(#dark)"><text x="671" y="625" text-anchor="middle" style="font-size:46px;font-weight:bold;fill:#2e2a2c;font-family:'DejaVu Sans',sans-serif">خدسات</text></g>

<!-- horizontal scrollbar -->
<rect x="828" y="632" width="506" height="12" rx="6" fill="#1e1e1e"/>
<path d="M838 636l-3.500 3.500 3.500 3.500z" fill="#999"/>
<rect x="845" y="634" width="453" height="9" rx="4" fill="#999"/>
<path d="M1326 634.500l6 4.500-6 4.500z" fill="#999"/>

<!-- vertical scrollbar -->
<rect x="1334" y="176" width="10" height="447" fill="#0e0e0e"/>
<rect x="1337" y="177" width="9" height="445" rx="4" fill="#1e1e1e"/>
<rect x="1340.500" y="193" width="5" height="274" rx="2" fill="#999"/>
<path d="M1341 187l3-3v3zM1341 612l3 3v-3z" fill="#999"/>
</svg>
</body></html>
